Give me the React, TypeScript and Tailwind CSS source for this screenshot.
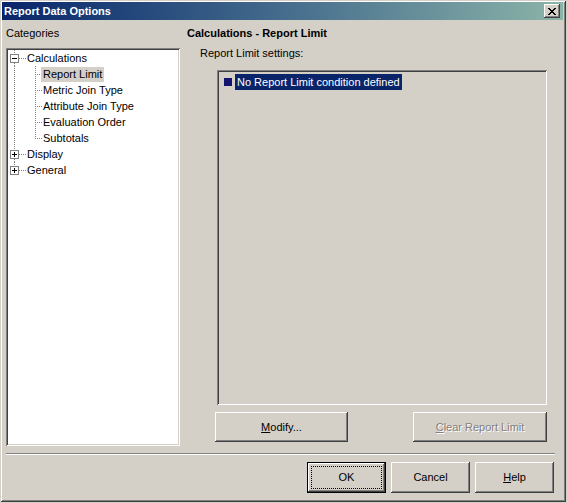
/**
 * Report Data Options — classic Windows 2000 dialog.
 */
import type { ReactNode } from 'react';

const raised =
  'shadow-[inset_-1px_-1px_#404040,inset_1px_1px_#ffffff,inset_-2px_-2px_#808080,inset_2px_2px_#d4d0c8]';
const sunken =
  'shadow-[inset_1px_1px_#808080,inset_-1px_-1px_#ffffff,inset_2px_2px_#404040,inset_-2px_-2px_#d4d0c8]';

// dotted connector pieces, one pixel on / one off
function vDots(x: number, y1: number, y2: number) {
  const out = [];
  for (let y = y1; y < y2; y += 2) out.push(<rect key={`v${x}-${y}`} x={x} y={y} width={1} height={1} />);
  return out;
}
function hDots(y: number, x1: number, x2: number) {
  const out = [];
  for (let x = x1; x < x2; x += 2) out.push(<rect key={`h${y}-${x}`} x={x} y={y} width={1} height={1} />);
  return out;
}

function Expander({ open, last }: { open: boolean; last?: boolean }) {
  return (
    <svg width={19} height={16} className="shrink-0" shapeRendering="crispEdges">
      <g fill="#808080">
        {vDots(6, 0, 4)}
        {!last && vDots(6, 13, 16)}
        {hDots(8, 11, 19)}
      </g>
      <rect x={2.5} y={4.5} width={8} height={8} fill="#fff" stroke="#808080" />
      <rect x={4} y={8} width={5} height={1} fill="#000" />
      {!open && <rect x={6} y={6} width={1} height={5} fill="#000" />}
    </svg>
  );
}

function ChildLines({ last }: { last?: boolean }) {
  return (
    <svg width={35} height={16} className="shrink-0" shapeRendering="crispEdges">
      <g fill="#808080">
        {vDots(6, 0, 16)}
        {vDots(27, 0, last ? 9 : 16)}
        {hDots(8, 29, 35)}
      </g>
    </svg>
  );
}

function TreeRow({ children, gutter }: { children: ReactNode; gutter: ReactNode }) {
  return (
    <div className="flex h-[16px] items-center">
      {gutter}
      {children}
    </div>
  );
}

function Btn({
  children,
  w,
  h,
  disabled,
  isDefault,
}: {
  children: ReactNode;
  w: string;
  h: string;
  disabled?: boolean;
  isDefault?: boolean;
}) {
  return (
    <div className={`${w} ${h} flex shrink-0 ${isDefault ? 'border border-black' : ''}`}>
      <div
        className={`flex flex-1 bg-[#d4d0c8] ${raised} ${
          disabled ? 'text-[#808080] [text-shadow:1px_1px_0_#ffffff]' : 'text-black'
        }`}
      >
        <div
          className={`m-[3px] flex flex-1 items-center justify-center border ${
            isDefault ? 'border-dotted border-black' : 'border-transparent'
          }`}
        >
          {children}
        </div>
      </div>
    </div>
  );
}

const xPixels = ['11000011', '01100110', '00111100', '00011000', '00111100', '01100110', '11000011'];

export default function App() {
  const children = ['Report Limit', 'Metric Join Type', 'Attribute Join Type', 'Evaluation Order', 'Subtotals'];

  return (
    <div className="w-[567px] h-[503px] bg-[#d4d0c8] font-['Liberation_Sans',Arial,sans-serif] text-[11px] text-black">
      <div
        className={`w-[566px] h-[502px] flex flex-col p-[2px] pr-[3px] bg-[#d4d0c8] shadow-[inset_1px_1px_#d4d0c8,inset_-1px_-1px_#404040,inset_2px_2px_#ffffff,inset_-2px_-2px_#808080]`}
      >
        {/* title bar */}
        <div className="h-[18px] flex items-center bg-gradient-to-r from-[#0a246a] to-[#8cb4a8] pl-[2px] pr-[3px]">
          <span className="text-white font-bold leading-[18px]">Report Data Options</span>
          <div className={`ml-auto w-[16px] h-[14px] flex items-center justify-center bg-[#d4d0c8] ${raised}`}>
            <svg width={8} height={7} shapeRendering="crispEdges">
              {xPixels.map((row, y) =>
                row.split('').map((c, x) => (c === '1' ? <rect key={`${x}-${y}`} x={x} y={y} width={1} height={1} fill="#000" /> : null))
              )}
            </svg>
          </div>
        </div>

        {/* body */}
        <div className="flex pt-[5px]">
          <div className="ml-[4px] w-[174px] flex flex-col">
            <div className="h-[16px] leading-[16px]">Categories</div>
            <div className={`mt-[7px] h-[398px] bg-white p-[2px] ${sunken}`}>
              <TreeRow gutter={<Expander open />}>
                <span className="leading-[16px]">Calculations</span>
              </TreeRow>
              {children.map((c, i) => (
                <TreeRow key={c} gutter={<ChildLines last={i === children.length - 1} />}>
                  <span className={`leading-[15px] px-[2px] -ml-[2px] ${i === 0 ? 'bg-[#d4d0c8]' : ''}`}>{c}</span>
                </TreeRow>
              ))}
              <TreeRow gutter={<Expander open={false} />}>
                <span className="leading-[16px]">Display</span>
              </TreeRow>
              <TreeRow gutter={<Expander open={false} last />}>
                <span className="leading-[16px]">General</span>
              </TreeRow>
            </div>
          </div>

          <div className="ml-[7px] flex flex-col">
            <div className="h-[16px] leading-[16px] font-bold">Calculations - Report Limit</div>
            <div className="mt-[4px] pl-[13px] h-[16px] leading-[16px]">Report Limit settings:</div>
            <div className={`ml-[30px] mt-[9px] w-[330px] h-[335px] bg-[#d4d0c8] pt-[4px] pl-[7px] ${sunken}`}>
              <div className="flex items-center h-[16px]">
                <div className="w-[8px] h-[8px] bg-[#14146e]" />
                <span className="ml-[3px] px-[2px] leading-[16px] bg-[#0a246a] text-white">
                  No Report Limit condition defined
                </span>
              </div>
            </div>
            <div className="flex ml-[28px] mt-[7px]">
              <Btn w="w-[133px]" h="h-[30px]">
                <span>
                  <span className="underline">M</span>odify...
                </span>
              </Btn>
              <div className="w-[65px]" />
              <Btn w="w-[134px]" h="h-[30px]" disabled>
                <span>
                  <span className="underline">C</span>lear Report Limit
                </span>
              </Btn>
            </div>
          </div>
        </div>

        {/* separator */}
        <div className="ml-[4px] mt-[7px] w-[549px] h-[2px] flex flex-col">
          <div className="h-[1px] bg-[#808080]" />
          <div className="h-[1px] bg-white" />
        </div>

        {/* dialog buttons */}
        <div className="flex mt-[7px] ml-[305px] gap-[5px]">
          <Btn w="w-[79px]" h="h-[31px]" isDefault>
            OK
          </Btn>
          <Btn w="w-[79px]" h="h-[31px]">
            Cancel
          </Btn>
          <Btn w="w-[79px]" h="h-[31px]">
            <span>
              <span className="underline">H</span>elp
            </span>
          </Btn>
        </div>
      </div>
    </div>
  );
}
